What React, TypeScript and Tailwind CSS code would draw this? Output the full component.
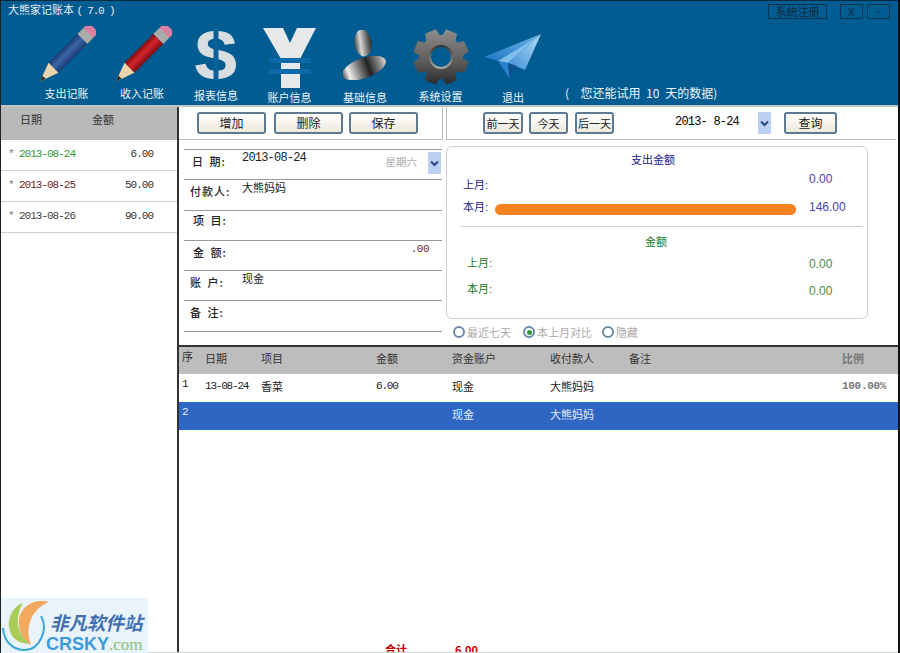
const cjk = '"Noto Sans CJK SC", "Liberation Sans", sans-serif';
const mono = '"Liberation Mono", "Noto Sans CJK SC", monospace';

function Pencil({ id, body, dark }: { id: string; body: string; dark: string }) {
  return (
    <svg width="60" height="60" viewBox="0 0 56 56">
      <defs>
        <linearGradient id={id} x1="0" y1="0" x2="1" y2="0">
          <stop offset="0" stopColor={dark} />
          <stop offset="0.45" stopColor={body} />
          <stop offset="1" stopColor={dark} />
        </linearGradient>
      </defs>
      <g transform="rotate(45 28 28) translate(21 -9)">
        <rect x="0" y="0" width="13" height="9" rx="3" fill="#dc7fa0" />
        <rect x="0" y="7" width="13" height="8" fill="#a9aca8" />
        <rect x="0" y="15" width="13" height="38" fill={`url(#${id})`} />
        <path d="M0 53 L13 53 L6.5 71 Z" fill="#ecd5ac" />
        <path d="M4.5 65.5 L8.5 65.5 L6.5 71 Z" fill="#2a2a2a" />
      </g>
    </svg>
  );
}

function Dollar() {
  return (
    <svg width="44" height="56" viewBox="0 0 44 56">
      <text x="22" y="50" textAnchor="middle" fontSize="66" fontWeight="700" fill="#d8dde0" stroke="#d8dde0" strokeWidth="1" fontFamily="Liberation Sans">S</text>
      <rect x="19.5" y="0" width="5" height="54" fill="#0a619a" />
    </svg>
  );
}

function Yen() {
  return (
    <svg width="54" height="62" viewBox="0 0 54 62">
      <path d="M0 1 H20 L27 16 L34 1 H53 L37 32 V61 H18 V32 Z" fill="#e6e8e9" />
      <rect x="6" y="31" width="42" height="5" fill="#0a6ba8" />
      <rect x="6" y="42" width="42" height="5" fill="#0a6ba8" />
    </svg>
  );
}

function Person() {
  return (
    <svg width="44" height="50" viewBox="0 0 44 50">
      <defs>
        <linearGradient id="headFill" x1="0" y1="0" x2="1" y2="0">
          <stop offset="0" stopColor="#4a4845" />
          <stop offset="0.35" stopColor="#d8d8d6" />
          <stop offset="0.7" stopColor="#777" />
          <stop offset="1" stopColor="#2e2c2a" />
        </linearGradient>
        <linearGradient id="bodyFill" x1="0" y1="0" x2="1" y2="0">
          <stop offset="0" stopColor="#555" />
          <stop offset="0.15" stopColor="#eee" />
          <stop offset="0.4" stopColor="#777" />
          <stop offset="0.6" stopColor="#222" />
          <stop offset="0.85" stopColor="#8a8a88" />
          <stop offset="1" stopColor="#ddd" />
        </linearGradient>
      </defs>
      <ellipse cx="21" cy="38" rx="23" ry="10" transform="rotate(-20 21 38)" fill="url(#bodyFill)" />
      <ellipse cx="20" cy="13" rx="8.5" ry="13.5" transform="rotate(-8 20 13)" fill="url(#headFill)" />
    </svg>
  );
}

// 8 toothed gear built from polar points
function gearPath() {
  const pts: string[] = [];
  for (let i = 0; i < 8; i++) {
    const a = (i * Math.PI) / 4 + Math.PI / 8;
    const deg = Math.PI / 180;
    [[-17, 21], [-11, 27], [11, 27], [17, 21]].forEach(([o, r]) => {
      pts.push(`${(28 + r * Math.cos(a + o * deg)).toFixed(1)} ${(28 + r * Math.sin(a + o * deg)).toFixed(1)}`);
    });
  }
  return `M${pts.join(" L")} Z`;
}

function Gear() {
  return (
    <svg width="56" height="56" viewBox="0 0 56 56">
      <defs>
        <linearGradient id="gearFill" x1="0" y1="0" x2="0" y2="1">
          <stop offset="0" stopColor="#8e8c8a" />
          <stop offset="0.6" stopColor="#5c5a58" />
          <stop offset="1" stopColor="#2e2e30" />
        </linearGradient>
        <linearGradient id="gearRing" x1="0" y1="0" x2="0" y2="1">
          <stop offset="0" stopColor="#2e2e2e" />
          <stop offset="1" stopColor="#b0aeac" />
        </linearGradient>
      </defs>
      <path d={gearPath()} fill="url(#gearFill)" stroke="url(#gearFill)" strokeWidth="2" strokeLinejoin="round" />
      <circle cx="28" cy="28" r="12" fill="url(#gearRing)" />
      <circle cx="28" cy="28" r="10" fill="#015c92" />
    </svg>
  );
}

function Plane() {
  return (
    <svg width="58" height="46" viewBox="0 0 58 46">
      <defs>
        <linearGradient id="planeTop" x1="0" y1="1" x2="1" y2="0">
          <stop offset="0" stopColor="#1f74c4" />
          <stop offset="1" stopColor="#6db6ea" />
        </linearGradient>
        <linearGradient id="planeSide" x1="0" y1="1" x2="1" y2="0">
          <stop offset="0" stopColor="#3a8ed8" />
          <stop offset="1" stopColor="#b6dcf4" />
        </linearGradient>
      </defs>
      <path d="M57 0 L0 23 L14 27 Z" fill="url(#planeTop)" />
      <path d="M57 0 L14 27 L24 29 Z" fill="#7fbfec" />
      <path d="M57 0 L24 29 L41 36 Z" fill="url(#planeSide)" />
      <path d="M14 27 L26 45 L24 29 Z" fill="#2a7fce" />
      <path d="M24 29 L26 45 L33 32 Z" fill="#0f4f8e" />
    </svg>
  );
}

const navItems = [
  { label: "支出记账", width: "w-[75px]", labelClass: "mt-0", iconClass: "mt-0 -ml-[1px]", icon: <Pencil id="bluePencil" body="#3a66a8" dark="#1d3c72" /> },
  { label: "收入记账", width: "w-[76px]", labelClass: "mt-0", iconClass: "mt-0 -ml-[1px]", icon: <Pencil id="redPencil" body="#d8232a" dark="#7c0f14" /> },
  { label: "报表信息", width: "w-[72px]", labelClass: "mt-[2px]", iconClass: "mt-[2px]", icon: <Dollar /> },
  { label: "账户信息", width: "w-[75px]", labelClass: "mt-[4px]", iconClass: "mt-[1px]", icon: <Yen /> },
  { label: "基础信息", width: "w-[76px]", labelClass: "mt-[4px]", iconClass: "mt-[4px]", icon: <Person /> },
  { label: "系统设置", width: "w-[75px]", labelClass: "mt-[3px]", iconClass: "mt-[3px]", icon: <Gear /> },
  { label: "退出", width: "w-[70px]", labelClass: "mt-[4px]", iconClass: "mt-[8px]", icon: <Plane /> },
];

function Btn({ children, className }: { children: string; className: string }) {
  return (
    <div className={`h-[22px] flex items-center justify-center rounded-[3px] border-2 border-[#5d7a92] bg-gradient-to-b from-white to-[#ece9dc] whitespace-nowrap text-[#222] ${className}`}>
      {children}
    </div>
  );
}

function Chevron() {
  return (
    <div className="w-[13px] h-[22px] flex items-center justify-center bg-[#bcd0f4]">
      <svg width="9" height="7" viewBox="0 0 9 7">
        <path d="M1 1.5 L4.5 5 L8 1.5" fill="none" stroke="#2a4a86" strokeWidth="2" />
      </svg>
    </div>
  );
}

const sideRows = [
  { date: "2013-08-24", amount: "6.00", color: "text-[#2f9a3c]" },
  { date: "2013-08-25", amount: "50.00", color: "text-[#6a1f24]" },
  { date: "2013-08-26", amount: "90.00", color: "text-[#444]" },
];

const formRows = [
  { label: "日 期:", left: "pl-[8px]", value: "2013-08-24", mono: true },
  { label: "付款人:", left: "pl-[6px]", value: "大熊妈妈" },
  { label: "项 目:", left: "pl-[9px] -mt-[2px]", value: "" },
  { label: "金 额:", left: "pl-[9px]", value: "" },
  { label: "账 户:", left: "pl-[6px]", value: "现金" },
  { label: "备 注:", left: "pl-[6px]", value: "" },
];

function Radio({ label, on, className }: { label: string; on?: boolean; className: string }) {
  return (
    <div className={`flex items-center gap-[2px] text-[11px] text-[#aaa] ${className}`}>
      <span className="w-[12px] h-[12px] rounded-full border-2 border-[#6e8aa6] bg-white flex items-center justify-center">
        {on && <span className="w-[5px] h-[5px] rounded-full bg-[#2f9a3c]" />}
      </span>
      {label}
    </div>
  );
}

const cols = ["w-[26px] pl-[3px]", "w-[56px]", "w-[115px]", "w-[76px]", "w-[98px]", "w-[79px]", "w-[213px]", "w-[50px] font-bold text-[#777]"];

function Row({ cells, className }: { cells: string[]; className: string }) {
  return (
    <div className={`flex ${className}`}>
      {cells.map((c, i) => {
        const isNum = /^[\d.\-%]+$/.test(c);
        const spacing = i === 7 ? "tracking-[-0.3px]" : "tracking-[-1.2px]";
        return (
          <div
            key={i}
            className={`${cols[i]} ${isNum ? spacing : ""} ${i === 0 ? "pb-[4px]" : ""}`}
            style={isNum ? { fontFamily: mono } : undefined}
          >
            {c}
          </div>
        );
      })}
    </div>
  );
}

export default function App() {
  return (
    <div className="relative w-[900px] h-[653px] overflow-hidden bg-white flex flex-col border-l border-r-2 border-l-[#222] border-r-[#111]" style={{ fontFamily: cjk }}>
      {/* header */}
      <div className="h-[105px] bg-[#015c92] border-t border-[#0b2a40] shrink-0 flex flex-col">
        <div className="h-[25px] flex items-start justify-between text-[#e6edf2]">
          <div className="pl-[7px] pt-[1px] text-[11px] leading-[14px] whitespace-pre">
            大熊家记账本 <span className="tracking-[-1.2px]" style={{ fontFamily: mono }}>( 7.0 )</span>
          </div>
          <div className="flex pt-[3px] pr-[8px] text-[11px] leading-[13px] text-[#12283a]">
            <div className="w-[59px] h-[15px] border border-[#0d3550] text-center">系统注册</div>
            <div className="ml-[13px] w-[23px] h-[15px] border border-[#0d3550] text-center">X</div>
            <div className="ml-[4px] w-[23px] h-[15px] border border-[#0d3550] text-center">-</div>
          </div>
        </div>
        <div className="flex pl-[28px] text-[11px] leading-[14px] text-[#eef3f6]">
          {navItems.map((item) => (
            <div key={item.label} className={`${item.width} flex flex-col items-center`}>
              <div className="h-[60px] flex justify-center items-start">
                <div className={item.iconClass}>{item.icon}</div>
              </div>
              <div className={item.labelClass}>{item.label}</div>
            </div>
          ))}
          <div className="pl-[17px] pt-[60px] text-[12px] whitespace-pre [word-spacing:3px]">(  您还能试用 10 天的数据)</div>
        </div>
      </div>

      <div className="flex-1 flex min-h-0 border-t-[2px] border-[#c4c4c4]">
        {/* left column */}
        <div className="w-[178px] shrink-0 border-r-[2px] border-[#333]">
          <div className="h-[33px] bg-[#b9b9b9] flex text-[11px] text-[#333] pt-[4px]">
            <div className="w-[91px] pl-[19px]">日期</div>
            <div>金额</div>
          </div>
          {sideRows.map((r) => (
            <div key={r.date} className="h-[31px] border-b border-[#cfcfcf] flex items-center pb-[1px] text-[11px] tracking-[-1px] pl-[7px] pr-[24px]" style={{ fontFamily: mono }}>
              <span className="w-[11px] text-[#777]">*</span>
              <span className={r.color}>{r.date}</span>
              <span className="ml-auto text-[#333]">{r.amount}</span>
            </div>
          ))}
        </div>

        {/* right column */}
        <div className="flex-1 min-w-0 flex flex-col">
          {/* toolbars */}
          <div className="h-[33px] shrink-0 flex">
            <div className="w-[264px] border-r border-b border-[#bbb] flex items-center pl-[18px] gap-[8px]">
              <Btn className="w-[69px] text-[12px]">增加</Btn>
              <Btn className="w-[69px] text-[12px]">删除</Btn>
              <Btn className="w-[69px] -ml-[2px] text-[12px]">保存</Btn>
            </div>
            <div className="ml-[3px] w-[450px] border-l border-b border-[#bbb] flex items-center pl-[36px]">
              <Btn className="w-[40px] text-[11px]">前一天</Btn>
              <Btn className="w-[39px] ml-[6px] text-[11px]">今天</Btn>
              <Btn className="w-[39px] ml-[7px] text-[11px]">后一天</Btn>
              <div className="w-[144px] pl-[61px] pb-[3px] text-[12px] tracking-[-0.8px] whitespace-pre" style={{ fontFamily: mono }}>2013- 8-24</div>
              <Chevron />
              <Btn className="w-[53px] ml-[13px] text-[12px]">查询</Btn>
            </div>
          </div>

          {/* form and chart */}
          <div className="h-[207px] shrink-0 flex border-b-[2px] border-[#333]">
            <div className="w-[263px] pl-[5px] pt-[9px]">
              <div className="border-t-[1.5px] border-[#999]">
                {formRows.map((row, i) => (
                  <div key={row.label} className="h-[30.3px] border-b-[1.5px] border-[#999] flex text-[#222]">
                    <div className={`w-[58px] text-[11px] font-medium leading-[22px] tracking-[1px] [word-spacing:2px] whitespace-pre ${row.left}`}>{row.label}</div>
                    <div
                      className={row.mono ? "text-[12px] tracking-[-0.8px] leading-[16px]" : "text-[11px] leading-[14px]"}
                      style={row.mono ? { fontFamily: mono } : undefined}
                    >
                      {row.value}
                    </div>
                    {i === 0 && (
                      <div className="ml-auto flex items-start">
                        <span className="pt-[4px] pr-[11px] text-[10.5px] leading-[16px] text-[#aaa]">星期六</span>
                        <div className="mt-[2px] mr-[1px]"><Chevron /></div>
                      </div>
                    )}
                    {i === 3 && (
                      <div className="ml-auto pr-[13px] text-[11px] tracking-[-0.5px] leading-[16px] text-[#6a1f24]" style={{ fontFamily: mono }}>.00</div>
                    )}
                  </div>
                ))}
              </div>
            </div>

            <div className="ml-[4px] pt-[6px] w-[422px]">
              <div className="h-[173px] rounded-[6px] border border-[#ccc] px-[14px] text-[11px] leading-[14px]" style={{ fontFamily: '"Liberation Sans", "Noto Sans CJK SC", sans-serif' }}>
                <div className="pt-[6px] text-center text-[#1c1c8c] pr-[8px]">支出金额</div>
                <div className="mt-[5px] flex items-start text-[#1c1c8c] h-[27px]">
                  <div className="pt-[6px] w-[347px] pl-[2px]">上月:</div>
                  <div className="pl-[1px] text-[#4a3fb0] text-[12px]">0.00</div>
                </div>
                <div className="flex items-center h-[16px] text-[#1c1c8c]">
                  <div className="w-[34px] pl-[2px]">本月:</div>
                  <div className="w-[301px] h-[11px] mt-[4px] rounded-full bg-[#f98220]" />
                  <div className="ml-[13px] text-[#4a3fb0] text-[12px]">146.00</div>
                </div>
                <div className="mt-[11px] -mr-[10px] border-t border-[#ccc] pt-[8px] text-center text-[#1a7a1a] pr-[12px]">金额</div>
                <div className="mt-[7px] flex items-start text-[#1a7a1a] h-[26px]">
                  <div className="w-[348px] pl-[6px]">上月:</div>
                  <div className="pt-[1px] text-[#4a8a4a] text-[12px]">0.00</div>
                </div>
                <div className="flex items-start text-[#1a7a1a]">
                  <div className="w-[348px] pl-[6px]">本月:</div>
                  <div className="pt-[2px] text-[#4a8a4a] text-[12px]">0.00</div>
                </div>
              </div>
              <div className="mt-[5px] pl-[7px] flex">
                <Radio label="最近七天" className="w-[70px]" />
                <Radio label="本上月对比" on className="w-[79px]" />
                <Radio label="隐藏" className="w-[50px]" />
              </div>
            </div>
          </div>

          {/* table */}
          <div className="flex-1 min-h-0 text-[11px] leading-[14px] flex flex-col">
            <Row className="h-[27px] shrink-0 bg-[#bdbdbd] items-center text-[#333] pb-[6px]" cells={["序", "日期", "项目", "金额", "资金账户", "收付款人", "备注", "比例"]} />
            <Row className="h-[28px] shrink-0 items-center text-[#222] pb-[4px]" cells={["1", "13-08-24", "香菜", "6.00", "现金", "大熊妈妈", "", "100.00%"]} />
            <Row className="h-[28px] shrink-0 items-center bg-[#2f66c4] text-[#e8eefa] pb-[5px]" cells={["2", "", "", "", "现金", "大熊妈妈", "", ""]} />
            <div className="flex-1 flex items-end pl-[206px] text-[11px] font-bold text-[#c00000] leading-[7px] overflow-hidden">
              <span className="w-[70px]">合计</span>
              <span>6.00</span>
            </div>
          </div>
        </div>
      </div>

      {/* bottom edge line */}
      <div className="absolute left-0 right-0 bottom-0 h-[1px] bg-[#cdd4d4]" />

      {/* watermark */}
      <div className="absolute left-0 bottom-0 w-[147px] h-[55px] bg-[#e9f3fb] overflow-hidden">
        <svg className="absolute left-0 top-0" width="50" height="55" viewBox="0 0 50 55">
          <path d="M48 4 C30 -1 16 12 18 27 C19 37 25 44 30 47 C26 38 24 14 48 4 Z" fill="#f2a85e" />
          <path d="M22 5 C8 10 4 28 12 39 C16 44 24 46 29 46 C18 38 12 22 22 5 Z" fill="#a8cc55" />
          <path d="M40 18 C48 32 38 52 24 52 C12 52 3 44 2 30" fill="none" stroke="#3aa6dc" strokeWidth="2" />
        </svg>
        <div className="absolute left-[49px] top-[13px] text-[18.5px] leading-[22px] font-bold italic text-[#3f6fb0] whitespace-nowrap">非凡软件站</div>
        <div className="absolute left-[45px] top-[37px] leading-[18px] whitespace-nowrap" style={{ fontFamily: '"Liberation Sans", sans-serif' }}>
          <span className="text-[18px] font-bold text-[#3a9bdc]">CRSKY</span>
          <span className="text-[17px] text-[#8cc26a]" style={{ fontFamily: '"Liberation Serif", serif' }}>.com</span>
        </div>
      </div>
    </div>
  );
}
